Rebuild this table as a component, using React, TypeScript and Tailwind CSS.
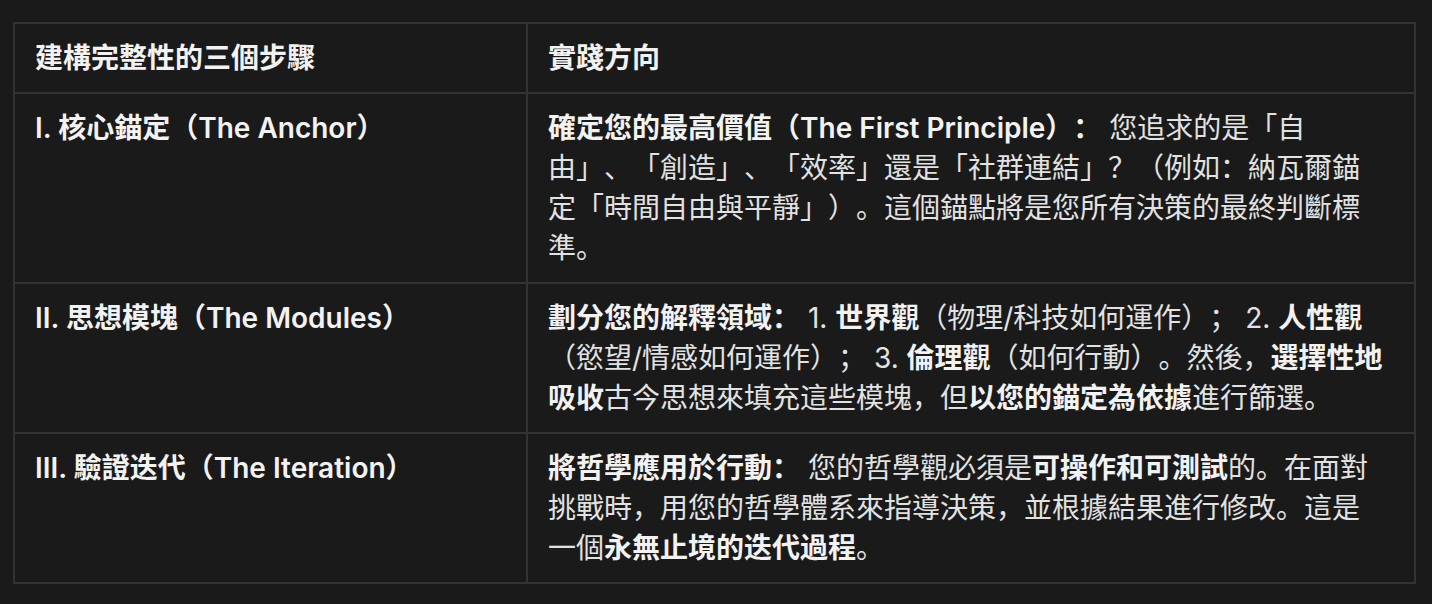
import React from 'react';

const B = ({ children }: { children: React.ReactNode }) => (
  <strong className="font-semibold text-[#f2f2f2]">{children}</strong>
);

const rows: { step: string; body: React.ReactNode }[] = [
  {
    step: 'I. 核心錨定（The Anchor）',
    body: (
      <>
        <B>確定您的最高價值（The First Principle）：</B> 您追求的是「自由」、「創造」、「效率」還是「社群連結」？（例如：納瓦爾錨定「時間自由與平靜」）。這個錨點將是您所有決策的最終判斷標準。
      </>
    ),
  },
  {
    step: 'II. 思想模塊（The Modules）',
    body: (
      <>
        <B>劃分您的解釋領域：</B> 1. <B>世界觀</B>（物理/科技如何運作）； 2. <B>人性觀</B>（慾望/情感如何運作）； 3. <B>倫理觀</B>（如何行動）。然後，<B>選擇性地吸收</B>古今思想來填充這些模塊，但<B>以您的錨定為依據</B>進行篩選。
      </>
    ),
  },
  {
    step: 'III. 驗證迭代（The Iteration）',
    body: (
      <>
        <B>將哲學應用於行動：</B> 您的哲學觀必須是<B>可操作和可測試</B>的。在面對挑戰時，用您的哲學體系來指導決策，並根據結果進行修改。這是一個<B>永無止境的迭代過程</B>。
      </>
    ),
  },
];

export default function App() {
  return (
    <div
      className="w-[1432px] h-[604px] bg-[#1a1a1a] pl-[13px] pt-[22px] text-[28px] leading-[40px] text-[#e2e2e2] [text-spacing-trim:space-all]"
      style={{ fontFamily: 'Inter, "Noto Sans CJK SC", sans-serif' }}
    >
      <table className="w-[1403px] border-collapse border-2 border-[#333333] table-fixed">
        <colgroup>
          <col className="w-[513px]" />
          <col />
        </colgroup>
        <thead>
          <tr>
            <th className="border-2 border-[#333333] px-5 py-[14px] text-left font-semibold text-[#f2f2f2]">建構完整性的三個步驟</th>
            <th className="border-2 border-[#333333] pl-5 pr-[30px] py-[14px] text-left font-semibold text-[#f2f2f2]">實踐方向</th>
          </tr>
        </thead>
        <tbody>
          {rows.map((r) => (
            <tr key={r.step}>
              <td className="border-2 border-[#333333] px-5 py-[14px] align-top font-semibold text-[#f2f2f2]">{r.step}</td>
              <td className="border-2 border-[#333333] pl-5 pr-[30px] py-[14px] align-top">{r.body}</td>
            </tr>
          ))}
        </tbody>
      </table>
    </div>
  );
}
